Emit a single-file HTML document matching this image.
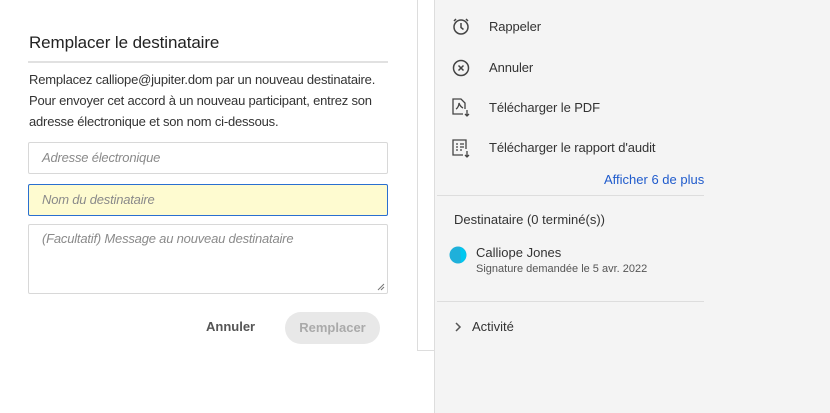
<!DOCTYPE html>
<html><head><meta charset="utf-8"><style>
*{box-sizing:border-box;margin:0;padding:0}
body{width:830px;height:413px;overflow:hidden;background:#fff;font-family:"Liberation Sans",sans-serif;position:relative;color:#2c2c2c}
.pop{position:absolute;left:0;top:0;width:418px;height:351px;border-right:1px solid #ddd;background:#fff}
.pb{position:absolute;left:417px;top:350px;width:17px;height:1px;background:#ddd}
.panel{position:absolute;left:434px;top:0;width:396px;height:413px;background:#f4f4f4;border-left:1px solid #ddd}
h1{position:absolute;left:29px;top:33px;font-size:17px;font-weight:normal;color:#222;letter-spacing:-0.1px}
.hr{position:absolute;left:28px;top:61px;width:360px;height:2px;background:#e1e1e1}
.desc{position:absolute;left:29px;top:69px;font-size:13px;line-height:21px;color:#333;letter-spacing:-0.2px}
.in{position:absolute;left:28px;width:360px;border:1px solid #d8d8d8;border-radius:2px;font-style:italic;color:#8a8a8a;font-size:13px;padding-left:13px;letter-spacing:-0.2px}
.btn{position:absolute;font-weight:bold;font-size:13px}
.it{position:absolute;left:489px;font-size:13px;color:#333;letter-spacing:-0.1px}
.ic{position:absolute;left:452px}
</style></head><body>
<div class="pop">
<h1>Remplacer le destinataire</h1>
<div class="hr"></div>
<div class="desc">Remplacez calliope@jupiter.dom par un nouveau destinataire.<br>Pour envoyer cet accord à un nouveau participant, entrez son<br>adresse électronique et son nom ci-dessous.</div>
<div class="in" style="top:142px;height:32px;line-height:30px">Adresse électronique</div>
<div class="in" style="top:184px;height:32px;line-height:30px;background:#fefbd0;border-color:#2a6fd0">Nom du destinataire</div>
<div class="in" style="top:224px;height:70px;padding-top:6px">(Facultatif) Message au nouveau destinataire
<svg style="position:absolute;right:2px;bottom:2px" width="8" height="8"><path d="M1 7L7 1M4 7L7 4" stroke="#777" stroke-width="1"/></svg></div>
<div class="btn" style="left:206px;top:319px;color:#555">Annuler</div>
<div class="btn" style="left:285px;top:312px;width:95px;height:32px;border-radius:16px;background:#e8e8e8;color:#aaa;text-align:center;line-height:32px">Remplacer</div>
</div>
<div class="pb"></div>
<div class="panel"></div>
<svg class="ic" style="top:17px" width="20" height="20" fill="none" stroke="#444" stroke-width="1.5"><circle cx="9" cy="10" r="7"/><path d="M9 6v4.5l2.5 2"/><path d="M2 4l2-2M16 4l-2-2"/></svg>
<div class="it" style="top:19px">Rappeler</div>
<svg class="ic" style="top:59px" width="20" height="20" fill="none" stroke="#444" stroke-width="1.5"><circle cx="9" cy="9" r="7.5"/><path d="M6.5 6.5l5 5M11.5 6.5l-5 5"/></svg>
<div class="it" style="top:60px">Annuler</div>
<svg class="ic" style="top:98px" width="20" height="20" fill="none" stroke="#444" stroke-width="1.3"><path d="M11 16H1V1h8l4 4v6"/><path d="M4 11c2-1 3-4 3-6 1 3 2 4 4 5"/><path d="M15 12v6M13 16l2 2 2-2"/></svg>
<div class="it" style="top:100px">Télécharger le PDF</div>
<svg class="ic" style="top:139px" width="20" height="20" fill="none" stroke="#444" stroke-width="1.3"><path d="M11 16H1V1h13v9"/><path d="M4 5h2M8 5h4M4 8h2M8 8h4M4 11h2M8 11h2"/><path d="M15 12v6M13 16l2 2 2-2"/></svg>
<div class="it" style="top:140px">Télécharger le rapport d'audit</div>
<div style="position:absolute;left:604px;top:172px;font-size:13px;color:#1f5bcc">Afficher 6 de plus</div>
<div style="position:absolute;left:437px;top:195px;width:267px;height:1px;background:#ddd"></div>
<div style="position:absolute;left:454px;top:212px;font-size:13px;color:#333">Destinataire (0 terminé(s))</div>
<svg style="position:absolute;left:449px;top:246px" width="18" height="18"><circle cx="9" cy="9" r="8.5" fill="#1fb0da"/><path d="M11 1A8.5 8.5 0 0 1 12 17Z" fill="#00c8f0"/></svg>
<div style="position:absolute;left:476px;top:245px;font-size:13px;color:#333">Calliope Jones</div>
<div style="position:absolute;left:476px;top:263px;font-size:11px;color:#555">Signature demandée le 5 avr. 2022</div>
<div style="position:absolute;left:437px;top:301px;width:267px;height:1px;background:#ddd"></div>
<svg style="position:absolute;left:454px;top:321px" width="8" height="12" fill="none" stroke="#555" stroke-width="1.5"><path d="M2 2l4 4-4 4"/></svg>
<div style="position:absolute;left:472px;top:319px;font-size:13px;color:#333">Activité</div>
</body></html>
